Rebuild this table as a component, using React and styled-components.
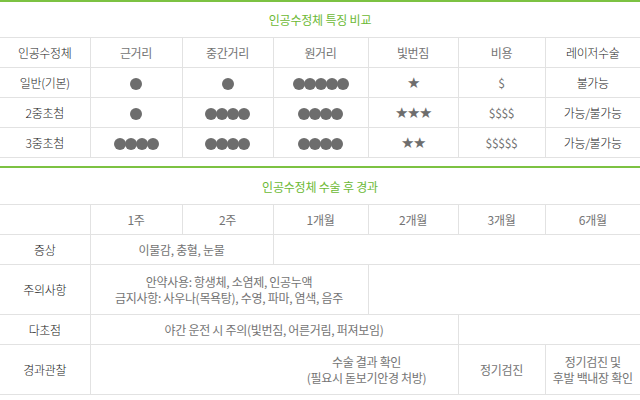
import React from 'react'
import styled, { createGlobalStyle } from 'styled-components'

const GlobalStyle = createGlobalStyle`
  body {
    margin: 0;
    background: #fff;
    font-family: "Noto Sans CJK KR", "Noto Sans", sans-serif;
  }
`

const Page = styled.div`
  width: 640px;
`

const Section = styled.section`
  margin-top: ${(p) => p.gap || 0}px;
`

const Title = styled.h3`
  margin: 0;
  height: ${(p) => p.h || 35}px;
  border-top: 2px solid #7cc242;
  display: flex;
  align-items: center;
  justify-content: center;
  font-size: 12px;
  font-weight: 400;
  color: #6cb934;
  letter-spacing: -0.2px;
`

const Table = styled.table`
  width: 640px;
  border-collapse: collapse;
  table-layout: fixed;
  border-top: 1px solid #e2e2e2;
`

const Row = styled.tr`
  height: ${(p) => p.h || 30}px;
`

const Cell = styled.td`
  padding: 0;
  padding-left: ${(p) => p.shift || 0}px;
  border-bottom: 1px solid #e2e2e2;
  border-left: 1px solid #e2e2e2;
  text-align: center;
  vertical-align: middle;
  font-size: 12px;
  font-weight: ${(p) => (p.dark ? 300 : 400)};
  line-height: 16px;
  letter-spacing: -0.3px;
  color: ${(p) => (p.dark ? '#222' : '#747474')};
  &:first-child {
    border-left: none;
  }
`

const Dots = styled.span`
  display: inline-flex;
  vertical-align: middle;
`

const Dot = styled.i`
  width: 12px;
  height: 12px;
  margin-left: -1px;
  border-radius: 50%;
  background: #6d6d6d;
  &:first-child {
    margin-left: 0;
  }
`

const Stars = styled.span`
  color: #6d6d6d;
  font-family: "DejaVu Sans", sans-serif;
  font-size: 15px;
  letter-spacing: -1.5px;
`

const widths = [90, 92, 91, 95, 90, 87, 95]

const Cols = () => (
  <colgroup>
    {widths.map((w, i) => (
      <col key={i} style={{ width: w }} />
    ))}
  </colgroup>
)

const DotRow = ({ n }) => (
  <Dots>
    {Array.from({ length: n }).map((_, i) => (
      <Dot key={i} />
    ))}
  </Dots>
)

const lenses = [
  { name: '일반(기본)', near: 1, mid: 1, far: 5, glare: '★', cost: '$', laser: '불가능' },
  { name: '2중초첨', near: 1, mid: 4, far: 4, glare: '★★★', cost: '$$$$', laser: '가능/불가능' },
  { name: '3중초첨', near: 4, mid: 4, far: 4, glare: '★★', cost: '$$$$$', laser: '가능/불가능' },
]

const periods = ['1주', '2주', '1개월', '2개월', '3개월', '6개월']

const App = () => (
  <Page>
    <GlobalStyle />
    <Section>
      <Title>인공수정체 특징 비교</Title>
      <Table>
        <Cols />
        <tbody>
          <Row>
            <Cell dark>인공수정체</Cell>
            <Cell>근거리</Cell>
            <Cell>중간거리</Cell>
            <Cell>원거리</Cell>
            <Cell>빛번짐</Cell>
            <Cell>비용</Cell>
            <Cell dark>레이저수술</Cell>
          </Row>
          {lenses.map((l) => (
            <Row key={l.name}>
              <Cell dark>{l.name}</Cell>
              <Cell><DotRow n={l.near} /></Cell>
              <Cell><DotRow n={l.mid} /></Cell>
              <Cell><DotRow n={l.far} /></Cell>
              <Cell><Stars>{l.glare}</Stars></Cell>
              <Cell>{l.cost}</Cell>
              <Cell dark>{l.laser}</Cell>
            </Row>
          ))}
        </tbody>
      </Table>
    </Section>

    <Section gap={8}>
      <Title h={36}>인공수정체 수술 후 경과</Title>
      <Table>
        <Cols />
        <tbody>
          <Row>
            <Cell />
            {periods.map((p) => (
              <Cell key={p}>{p}</Cell>
            ))}
          </Row>
          <Row>
            <Cell dark>증상</Cell>
            <Cell colSpan={2}>이물감, 충혈, 눈물</Cell>
            <Cell colSpan={4} />
          </Row>
          <Row h={50}>
            <Cell dark>주의사항</Cell>
            <Cell colSpan={3}>
              안약사용: 항생체, 소염제, 인공누액
              <br />
              금지사항: 사우나(목욕탕), 수영, 파마, 염색, 음주
            </Cell>
            <Cell colSpan={3} />
          </Row>
          <Row>
            <Cell dark>다초점</Cell>
            <Cell colSpan={4}>야간 운전 시 주의(빛번짐, 어른거림, 퍼져보임)</Cell>
            <Cell colSpan={2} />
          </Row>
          <Row h={50}>
            <Cell dark>경과관찰</Cell>
            <Cell colSpan={4} shift={185}>
              수술 결과 확인
              <br />
              (필요시 돋보기안경 처방)
            </Cell>
            <Cell>정기검진</Cell>
            <Cell>
              정기검진 및
              <br />
              후발 백내장 확인
            </Cell>
          </Row>
        </tbody>
      </Table>
    </Section>
  </Page>
)

export default App
